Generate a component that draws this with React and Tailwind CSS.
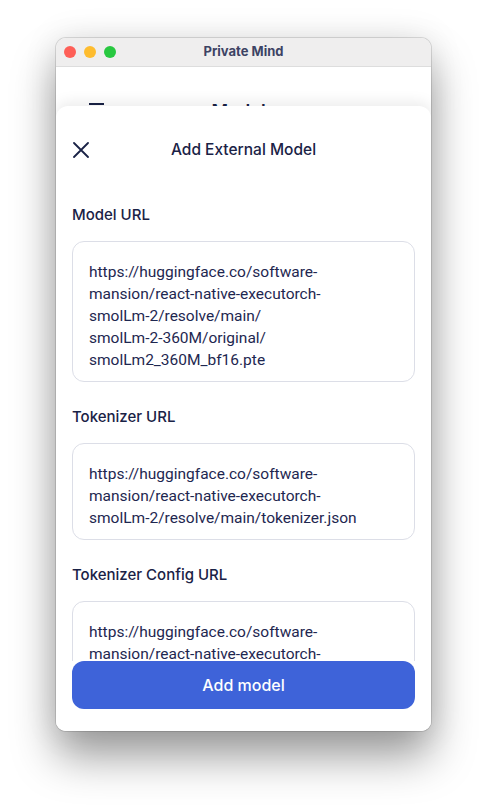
const modelUrl = [
  "https://huggingface.co/software-",
  "mansion/react-native-executorch-",
  "smolLm-2/resolve/main/",
  "smolLm-2-360M/original/",
  "smolLm2_360M_bf16.pte",
];

const tokenizerUrl = [
  "https://huggingface.co/software-",
  "mansion/react-native-executorch-",
  "smolLm-2/resolve/main/tokenizer.json",
];

const configUrl = [
  "https://huggingface.co/software-",
  "mansion/react-native-executorch-",
  "smolLm-2/resolve/main/tokenizer_config.json",
];

function Field({ label, lines }) {
  return (
    <div className="flex flex-col">
      <div className="text-[15px] leading-[22px] font-medium text-[#1a2246]">{label}</div>
      <div className="mt-[15px] rounded-[12px] border border-[#dcdee7] px-4 pt-[19px] pb-[10px] font-['Roboto',sans-serif] text-[15.5px] leading-[22px] text-[#1e2750]">
        {lines.map((l, i) => (
          <div key={i} className="whitespace-nowrap">{l}</div>
        ))}
      </div>
    </div>
  );
}

export default function App() {
  return (
    <div className="min-h-screen w-full bg-white pt-[38px] pl-[56px] font-['Inter',sans-serif]">
      <div className="w-[375px] h-[693px] rounded-[10px] overflow-hidden flex flex-col bg-white shadow-[0_26px_44px_rgba(0,0,0,0.38),0_0_34px_rgba(0,0,0,0.1),0_0_0_1px_rgba(0,0,0,0.12)]">
        {/* title bar */}
        <div className="relative h-[29px] shrink-0 bg-[#efeeee] border-b border-[#dddddd] flex items-center">
          <div className="flex gap-2 pl-2">
            <span className="w-3 h-3 rounded-full bg-[#fe5f57]" />
            <span className="w-3 h-3 rounded-full bg-[#febc2e]" />
            <span className="w-3 h-3 rounded-full bg-[#28c840]" />
          </div>
          <div className="absolute inset-0 flex items-center justify-center text-[13px] font-bold text-[#3d4364]">
            Private Mind
          </div>
        </div>

        {/* app content behind the sheet */}
        <div className="relative flex-1 bg-white">
          <div className="relative flex items-start h-[24px] mt-[33px] px-[33px]">
            <div className="flex flex-col gap-[4px] mt-[3px]">
              <span className="w-[15px] h-[2px] bg-[#1a2246]" />
              <span className="w-[15px] h-[2px] bg-[#1a2246]" />
              <span className="w-[15px] h-[2px] bg-[#1a2246]" />
            </div>
            <div className="absolute inset-0 flex items-start justify-center text-[18px] leading-[24px] font-semibold text-[#1a2246]">
              Models
            </div>
          </div>

          {/* sheet */}
          <div className="absolute left-0 right-0 top-[39px] bottom-0 rounded-t-[12px] bg-white flex flex-col shadow-[0_-4px_14px_rgba(0,0,0,0.08)]">
            <div className="flex-1 overflow-hidden">
              <div className="relative flex items-center justify-center h-[24px] mt-[32px]">
                <svg className="absolute left-[17px]" width="16" height="16" viewBox="0 0 16 16" fill="none" stroke="#1a2246" strokeWidth="1.8" strokeLinecap="round">
                  <path d="M1 1L15 15M15 1L1 15" />
                </svg>
                <div className="text-[15.5px] font-medium text-[#1a2246]">Add External Model</div>
              </div>
              <div className="px-4 mt-[42px] flex flex-col gap-6">
                <Field label="Model URL" lines={modelUrl} />
                <Field label="Tokenizer URL" lines={tokenizerUrl} />
                <Field label="Tokenizer Config URL" lines={configUrl} />
              </div>
            </div>
            <div className="px-4 pb-[22px] shrink-0">
              <button className="w-full h-[48px] rounded-[12px] bg-[#3e63d9] text-white text-[16px] font-medium">
                Add model
              </button>
            </div>
          </div>
        </div>
      </div>
    </div>
  );
}
